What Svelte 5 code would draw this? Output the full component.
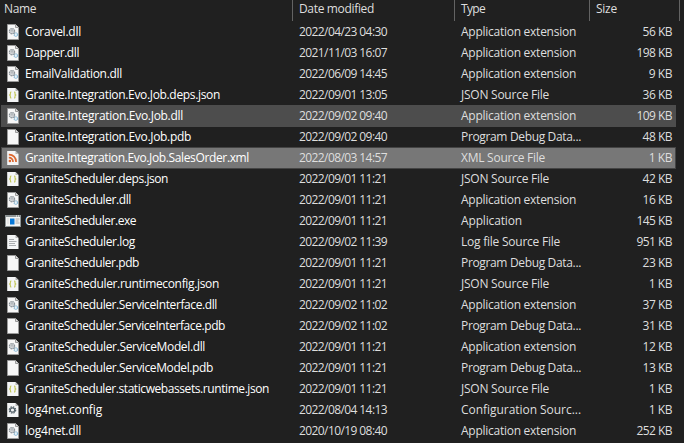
<script>
  // name, text width, icon, date, type, size, state
  const files = [
    ['Coravel.dll', 56, 'dll', '2022/04/23 04:30', 'Application extension', '56 KB'],
    ['Dapper.dll', 54, 'dll', '2021/11/03 16:07', 'Application extension', '198 KB'],
    ['EmailValidation.dll', 97, 'dll', '2022/06/09 14:45', 'Application extension', '9 KB'],
    ['Granite.Integration.Evo.Job.deps.json', 195, 'json', '2022/09/01 13:05', 'JSON Source File', '36 KB'],
    ['Granite.Integration.Evo.Job.dll', 158, 'dll', '2022/09/02 09:40', 'Application extension', '109 KB', 'hover'],
    ['Granite.Integration.Evo.Job.pdb', 166, 'blank', '2022/09/02 09:40', 'Program Debug Data...', '48 KB'],
    ['Granite.Integration.Evo.Job.SalesOrder.xml', 224, 'xml', '2022/08/03 14:57', 'XML Source File', '1 KB', 'selected'],
    ['GraniteScheduler.deps.json', 143, 'json', '2022/09/01 11:21', 'JSON Source File', '42 KB'],
    ['GraniteScheduler.dll', 106, 'dll', '2022/09/01 11:21', 'Application extension', '16 KB'],
    ['GraniteScheduler.exe', 111, 'exe', '2022/09/01 11:21', 'Application', '145 KB'],
    ['GraniteScheduler.log', 110, 'log', '2022/09/02 11:39', 'Log file Source File', '951 KB'],
    ['GraniteScheduler.pdb', 114, 'blank', '2022/09/01 11:21', 'Program Debug Data...', '23 KB'],
    ['GraniteScheduler.runtimeconfig.json', 194, 'json', '2022/09/01 11:21', 'JSON Source File', '1 KB'],
    ['GraniteScheduler.ServiceInterface.dll', 192, 'dll', '2022/09/02 11:02', 'Application extension', '37 KB'],
    ['GraniteScheduler.ServiceInterface.pdb', 200, 'blank', '2022/09/02 11:02', 'Program Debug Data...', '31 KB'],
    ['GraniteScheduler.ServiceModel.dll', 180, 'dll', '2022/09/01 11:21', 'Application extension', '12 KB'],
    ['GraniteScheduler.ServiceModel.pdb', 188, 'blank', '2022/09/01 11:21', 'Program Debug Data...', '13 KB'],
    ['GraniteScheduler.staticwebassets.runtime.json', 244, 'json', '2022/09/01 11:21', 'JSON Source File', '1 KB'],
    ['log4net.config', 77, 'config', '2022/08/04 14:13', 'Configuration Sourc...', '1 KB'],
    ['log4net.dll', 56, 'dll', '2020/10/19 08:40', 'Application extension', '252 KB']
  ];
  const typeWidths = {
    'Application extension': 115,
    'JSON Source File': 88,
    'Program Debug Data...': 120,
    'XML Source File': 84,
    'Application': 61,
    'Log file Source File': 99,
    'Configuration Sourc...': 120
  };

  // Spreads the letters so that a label takes the given width.
  function fit(node, width) {
    const natural = node.getBoundingClientRect().width;
    node.style.letterSpacing = (width - natural) / node.textContent.length + 'px';
  }
</script>

{#snippet icon(kind)}
  <svg class="icon" viewBox="0 0 16 16" width="16" height="16">
    {#if kind === 'exe'}
      <rect x="0" y="2" width="16" height="12" fill="#8e9496" />
      <rect x="1" y="4" width="14" height="9" fill="#f4f4f4" />
      <path d="M11 3h1M13 3h1" stroke="#fff" />
      <rect x="5" y="5.5" width="4.5" height="6" fill="#0878d8" />
      <path d="M10.5 6h4M10.5 8h3M10.5 10h4" stroke="#999" stroke-width=".8" />
      <path d="M2 6h2M2 8h2M2 10h2" stroke="#ddd" />
    {:else if kind === 'dll' || kind === 'blank'}
      <path d="M2.5 .5h8l3 3v12h-11z" fill="#f7f7f7" stroke="#9a9a9a" />
      <path d="M10.5 .5v3h3" fill="#ddd" stroke="#9a9a9a" />
      {#if kind === 'dll'}
        <circle cx="7" cy="7.2" r="2.5" fill="#f1f2f3" stroke="#8c9399" stroke-width="1.4" stroke-dasharray="1.5 .46" />
        <circle cx="7" cy="7.2" r="1" fill="#fff" stroke="#8c9399" stroke-width=".7" />
        <circle cx="10.8" cy="10.6" r="1.7" fill="#e8f4fb" stroke="#8fbcd8" stroke-width="1.2" stroke-dasharray="1.2 .5" />
        <path d="M8.6 9.2l1.2 1" stroke="#8c9399" stroke-width=".9" />
      {/if}
    {:else}
      <path d="M2.2 1h8.3l3 3v11H2.2z" fill="#f4f5f6" />
      <path d="M10.5 1v3h3z" fill="#b5b5b5" />
      {#if kind === 'json'}
        <path d="M6.4 5Q5.3 5 5.4 6v1.2L4.6 8l.8.8V10q-.1 1 1 1M9 5q1.1 0 1 1v1.2l.8.8-.8.8V10q.1 1-1 1" fill="none" stroke="#c3c75a" stroke-width="1.1" />
      {:else if kind === 'xml'}
        <path d="M3.8 4.6a7 7 0 0 1 7.3 7.4M3.8 7.7a4 4 0 0 1 4.2 4.3" fill="none" stroke="#dc672f" stroke-width="1.7" />
        <circle cx="4.9" cy="11" r="1.3" fill="#dc672f" />
      {:else if kind === 'log'}
        <path d="M4 5.5h5M4 7.5h7.5M4 9.5h6M4 11.5h7" stroke="#a2a5a8" stroke-width=".9" />
      {:else}
        <circle cx="7.5" cy="8" r="3.2" fill="none" stroke="#526068" stroke-width="1.2" stroke-dasharray="1.5 1.01" />
        <circle cx="7.5" cy="8" r="2.2" fill="#f4f5f6" stroke="#526068" stroke-width="1.2" />
      {/if}
    {/if}
  </svg>
{/snippet}

<div class="explorer">
  <header>
    <div class="name"><span use:fit={32}>Name</span></div>
    <div class="date"><span use:fit={75}>Date modified</span></div>
    <div class="type"><span use:fit={24}>Type</span></div>
    <div class="size"><span use:fit={21}>Size</span></div>
  </header>
  <main>
    {#each files as [name, width, kind, date, type, size, state]}
      <div class="row {state ?? ''}">
        <div class="file">{@render icon(kind)}<span use:fit={width}>{name}</span></div>
        <div class="modified"><span use:fit={88}>{date}</span></div>
        <div class="kind"><span use:fit={typeWidths[type]}>{type}</span></div>
        <div class="bytes"><span use:fit={17.2 + (size.length - 3) * 6.1}>{size}</span></div>
      </div>
    {/each}
  </main>
</div>

<style>
  :global(body) { background: #202020; }
  .explorer {
    width: 684px;
    height: 443px;
    overflow: hidden;
    background: #202020;
    color: #dedede;
    font: 12px/20px "Open Sans", "Noto Sans", sans-serif;
    white-space: nowrap;
  }
  header {
    display: grid;
    grid-template-columns: 293px 162px 135px 90px;
    height: 21px;
    line-height: 18px;
  }
  header div { border-right: 1px solid #636363; box-sizing: border-box; }
  .name { padding-left: 4px; }
  .date, .type, .size { padding-left: 6px; }
  main { width: 675px; margin-left: 1px; }
  .row {
    display: grid;
    grid-template-columns: 297px 162px 140px 1fr;
    box-sizing: border-box;
    height: 22px;
    margin-bottom: -1px;
    border: 1px solid transparent;
  }
  .hover { background: #4d4d4d; }
  .selected { background: #777; border-color: #444; }
  .file { display: flex; align-items: center; gap: 4px; padding-left: 3px; color: #fff; }
  .icon { flex: none; display: block; }
  .bytes { text-align: right; padding-right: 3px; }
  span { display: inline-block; }
</style>
